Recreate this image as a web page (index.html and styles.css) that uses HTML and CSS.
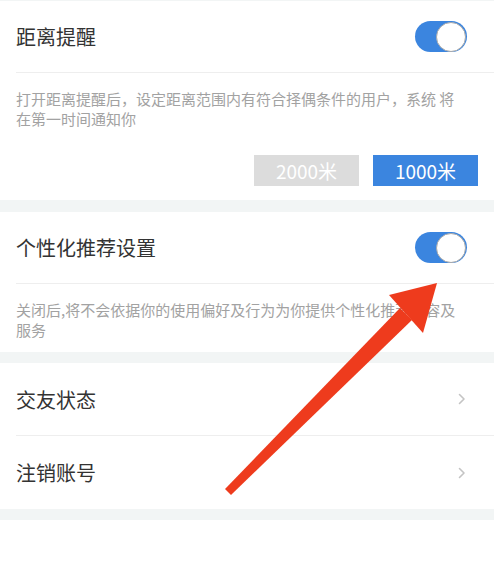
FILE: index.html
```html
<!DOCTYPE html>
<html lang="zh-CN">
<head>
    <meta charset="UTF-8">
    <meta name="viewport" content="width=device-width, initial-scale=1.0">
    <title>隐私设置</title>
    <link rel="stylesheet" href="styles.css">
</head>
<body>
    <div class="settings">
        <div class="card">
            <div class="row">
                <span class="row-title">距离提醒</span>
                <span class="switch on"><span class="knob"></span></span>
            </div>
            <p class="desc">打开距离提醒后，设定距离范围内有符合择偶条件的用户，系统 将在第一时间通知你</p>
            <div class="ranges">
                <button class="range">2000米</button>
                <button class="range active">1000米</button>
            </div>
        </div>

        <div class="card">
            <div class="row">
                <span class="row-title">个性化推荐设置</span>
                <span class="switch on"><span class="knob"></span></span>
            </div>
            <p class="desc">关闭后,将不会依据你的使用偏好及行为为你提供个性化推荐内容及服务</p>
        </div>

        <div class="card">
            <div class="row link">
                <span class="row-title">交友状态</span>
                <svg class="chevron" width="8" height="12" viewBox="0 0 8 12"><polyline points="1.5,1.5 6,6 1.5,10.5" fill="none" stroke="#c4c4c4" stroke-width="1.6" stroke-linecap="round" stroke-linejoin="round"/></svg>
            </div>
            <div class="row link last">
                <span class="row-title">注销账号</span>
                <svg class="chevron" width="8" height="12" viewBox="0 0 8 12"><polyline points="1.5,1.5 6,6 1.5,10.5" fill="none" stroke="#c4c4c4" stroke-width="1.6" stroke-linecap="round" stroke-linejoin="round"/></svg>
            </div>
        </div>
    </div>

    <!-- annotation arrow drawn over the screenshot -->
    <svg class="arrow" width="494" height="584" viewBox="0 0 494 584">
        <polygon points="225,489 231,495 412,320 400,308" fill="#ee3b1d"/>
        <polygon points="437,283 389,295 423,333" fill="#ee3b1d"/>
    </svg>
</body>
</html>
```

FILE: styles.css
```css
* {
    margin: 0;
    padding: 0;
    box-sizing: border-box;
}

body {
    font-family: "Noto Sans CJK SC", "Noto Sans", sans-serif;
    background: #fff;
    width: 494px;
    min-height: 584px;
    position: relative;
}

.settings {
    background: #f2f5f5;
    padding: 1px 0 11px;
}

.card {
    background: #fff;
    margin-bottom: 11px;
}

.card:first-child {
    margin-bottom: 12px;
}

.card:last-child {
    margin-bottom: 0;
}

.row {
    height: 72px;
    margin-left: 16px;
    padding-right: 27px;
    display: flex;
    align-items: center;
    justify-content: space-between;
    border-bottom: 1px solid #eeeeee;
}

.row.link {
    height: 73px;
    padding-right: 28px;
}

.row.last {
    border-bottom: none;
}

.row-title {
    font-size: 20px;
    color: #333;
}

.switch {
    width: 52px;
    height: 31px;
    border-radius: 16px;
    background: #3b85df;
    display: flex;
    align-items: center;
    justify-content: flex-end;
    padding: 0 1px;
}

.knob {
    width: 30px;
    height: 30px;
    border-radius: 50%;
    background: #fff;
    border: 1px solid #a9a9a9;
}

.desc {
    font-size: 15px;
    line-height: 19.5px;
    color: #a2a2a2;
    padding: 16px 26px 13px 16px;
}

.ranges {
    display: flex;
    justify-content: flex-end;
    gap: 14px;
    padding: 14px 16px 14px 0;
}

.range {
    width: 105px;
    height: 31px;
    border: none;
    background: #dcdcdc;
    color: #fff;
    font-family: inherit;
    font-size: 19px;
}

.range.active {
    background: #3b85df;
}

.arrow {
    position: absolute;
    top: 0;
    left: 0;
}
```
